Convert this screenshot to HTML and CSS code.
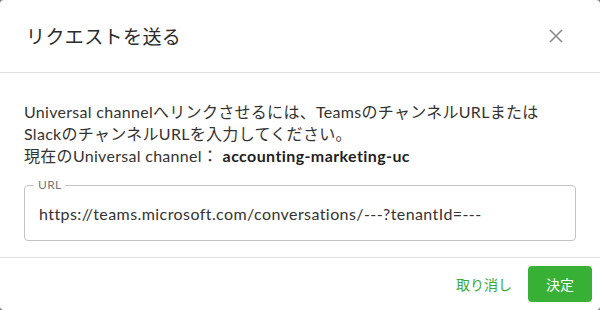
FILE: index.html
```html
<!DOCTYPE html>
<html lang="ja">
<head>
<meta charset="utf-8">
<title>リクエストを送る</title>
<link rel="stylesheet" href="styles.css">
</head>
<body>
<div class="dialog">
  <div class="dialog-header">
    <h2 class="dialog-title">リクエストを送る</h2>
    <button class="close-btn" aria-label="閉じる">
      <svg width="14" height="14" viewBox="0 0 14 14"><path d="M1 1 L13 13 M13 1 L1 13" stroke="#8a8a8a" stroke-width="1.6" fill="none"/></svg>
    </button>
  </div>
  <div class="dialog-body">
    <p class="desc">Universal channelへリンクさせるには、TeamsのチャンネルURLまたは<br>SlackのチャンネルURLを入力してください。<br>現在のUniversal channel： <strong class="channel">accounting-marketing-uc</strong></p>
    <div class="field">
      <span class="field-label">URL</span>
      <div class="field-input">https://teams.microsoft.com/conversations/---?tenantId=---</div>
    </div>
  </div>
  <div class="dialog-footer">
    <button class="btn btn-text">取り消し</button>
    <button class="btn btn-primary">決定</button>
  </div>
</div>
</body>
</html>
```
FILE: styles.css
```css
* { box-sizing: border-box; }
html, body { margin: 0; padding: 0; }
body {
  width: 600px;
  height: 310px;
  background: #7a7a7a;
  font-family: "Lato", "Noto Sans CJK JP", sans-serif;
  color: #333;
}
.dialog {
  width: 600px;
  height: 310px;
  background: #fff;
  border-radius: 4px;
  display: flex;
  flex-direction: column;
}
.dialog-header {
  height: 73px;
  border-bottom: 1px solid #e0e0e0;
  display: flex;
  align-items: center;
  justify-content: space-between;
  padding: 0 37px 0 26px;
}
.dialog-title {
  margin: 0;
  font-family: "Noto Sans CJK JP", sans-serif;
  font-size: 19px;
  letter-spacing: 0.4px;
  font-weight: 400;
  color: #2b2b2b;
  line-height: 24px;
}
.close-btn {
  border: 0;
  background: none;
  padding: 0;
  width: 14px;
  height: 14px;
  display: flex;
}
.dialog-body {
  flex: 1;
  padding: 27px 24px 16px;
  display: flex;
  flex-direction: column;
  justify-content: flex-end;
}
.desc {
  margin: 0 0 18px;
  font-size: 16px;
  line-height: 22px;
  letter-spacing: 0.3px;
  color: #333;
}
.channel { font-weight: 700; color: #1f1f1f; letter-spacing: 0.4px; }
.field {
  position: relative;
}
.field-label {
  position: absolute;
  left: 10px;
  top: -8px;
  padding: 0 4px;
  background: #fff;
  font-size: 12px;
  line-height: 16px;
  letter-spacing: 0.3px;
  color: #777;
}
.field-input {
  height: 56px;
  border: 1px solid #c4c4c4;
  border-radius: 4px;
  padding: 0 14px;
  display: flex;
  align-items: center;
  font-size: 16px;
  letter-spacing: 0.42px;
  color: #333;
}
.dialog-footer {
  height: 53px;
  border-top: 1px solid #e0e0e0;
  padding: 8px;
  display: flex;
  justify-content: flex-end;
  align-items: center;
  gap: 8px;
}
.btn {
  font-family: "Noto Sans CJK JP", sans-serif;
  font-size: 14px;
  line-height: 24px;
  min-width: 64px;
  border: 0;
  border-radius: 4px;
  cursor: pointer;
}
.btn-text {
  background: none;
  color: #3aaa35;
  padding: 6px 8px;
}
.btn-primary {
  background: #38b036;
  color: #fff;
  padding: 6px 18px;
  height: 36px;
}
```
